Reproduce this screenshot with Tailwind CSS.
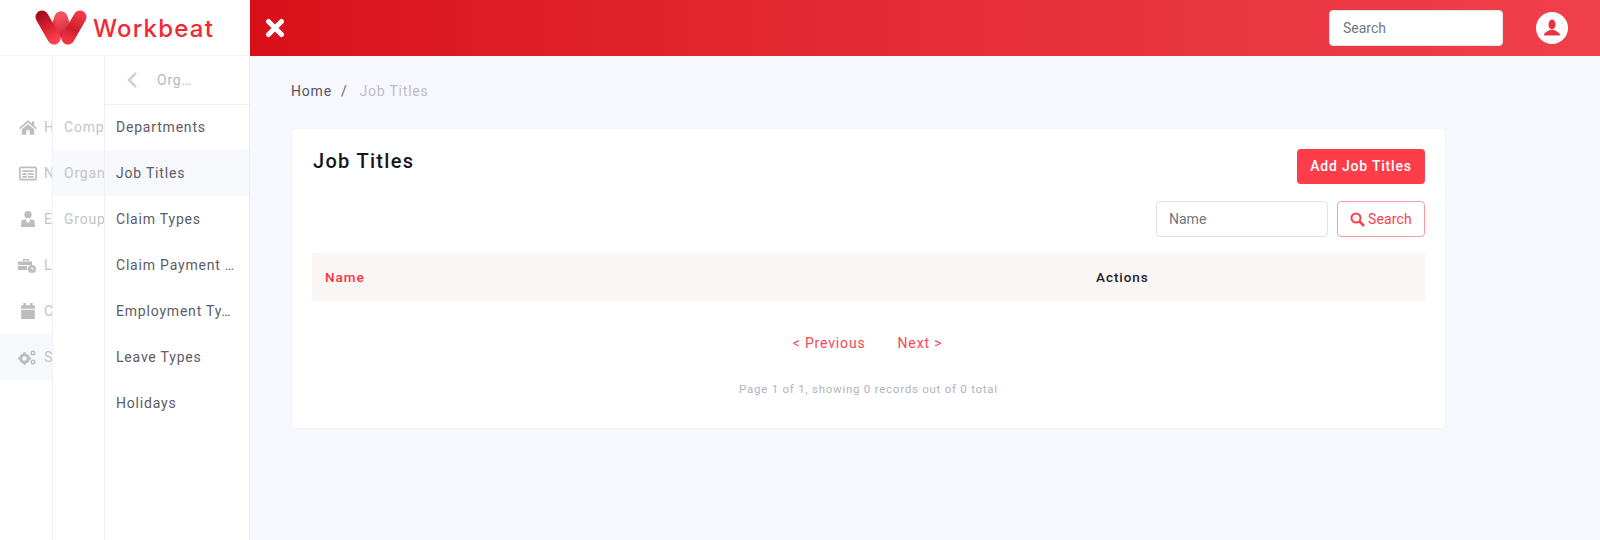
<!DOCTYPE html>
<html lang="en">
<head>
    <meta charset="UTF-8">
    <title>Job Titles</title>
    <script src="https://cdn.jsdelivr.net/npm/@tailwindcss/browser@4"></script>
</head>
<body class="bg-[#f7f8fd] h-[540px] overflow-hidden font-['Roboto',sans-serif] tracking-[0.05em]">
    <!-- top bar -->
    <div class="flex h-[56px]">
        <div class="w-[250px] bg-white border-b border-[#f3f3f9] flex items-center pl-[35px] gap-[6px]">
            <svg width="52" height="35" viewBox="0 0 52 35" fill="none" stroke-width="13" stroke-linecap="round">
                <defs>
                    <linearGradient id="w1" gradientUnits="userSpaceOnUse" x1="7" y1="4" x2="19" y2="30"><stop offset="0" stop-color="#a80f1d"/><stop offset="0.5" stop-color="#d8202f"/><stop offset="1" stop-color="#fb4050"/></linearGradient>
                    <linearGradient id="w2" gradientUnits="userSpaceOnUse" x1="26" y1="6" x2="33" y2="30"><stop offset="0" stop-color="#f5525f"/><stop offset="1" stop-color="#c5182a"/></linearGradient>
                    <linearGradient id="w3" gradientUnits="userSpaceOnUse" x1="45" y1="4" x2="33" y2="30"><stop offset="0" stop-color="#f23a49"/><stop offset="0.6" stop-color="#cf1d2c"/><stop offset="1" stop-color="#ee3343"/></linearGradient>
                </defs>
                <path d="M26 8 L19 27" stroke="#ee3444"/>
                <path d="M26 8 L33 27" stroke="url(#w2)"/>
                <path d="M45 7 L33 28" stroke="url(#w3)"/>
                <path d="M7 7 L19 28" stroke="url(#w1)"/>
            </svg>
            <span class="font-['Inter',sans-serif] font-medium text-[#f32735] text-[24px] leading-none tracking-[0.05em] mt-[3px]">Workbeat</span>
        </div>
        <div class="flex-1 flex items-center bg-linear-to-r from-[#d90f18] to-[#f0404b]">
            <svg width="20" height="20" viewBox="0 0 20 20" class="ml-[15px]" fill="none" stroke="white" stroke-width="5" stroke-linecap="round"><path d="M3.500 3.500 L16.500 16.500 M16.500 3.500 L3.500 16.500"/></svg>
            <div class="ml-auto w-[174px] h-[36px] rounded-[4px] bg-white border border-[#e3e6ea] flex items-center pl-[13px] text-[14px] text-[#6f7780] tracking-normal">Search</div>
            <div class="ml-[33px] mr-[32px] w-[32px] h-[32px] rounded-full bg-white flex items-center justify-center">
                <svg width="20" height="20" viewBox="0 0 20 20" fill="#f0303f"><ellipse cx="10" cy="6.500" rx="3.500" ry="5"/><path d="M2 17.500 C2 14.500 5.500 13.500 8 12 L12 12 C14.500 13.500 18 14.500 18 17.500 Z"/></svg>
            </div>
        </div>
    </div>

    <div class="flex h-[484px]">
        <!-- sidebar -->
        <div class="w-[250px] flex bg-white border-r border-[#eeeef8]">
            <!-- first column, behind the others -->
            <div class="w-[53px] shrink-0 overflow-hidden border-r border-[#f1f1f8] pt-[48px] text-[14px] text-[#c4c4c8] whitespace-nowrap">
                <div class="h-[46px] flex items-center pl-[19px] gap-[7px]">
                    <svg class="shrink-0" width="18" height="15" viewBox="0 0 16 13" fill="#bdbdbd"><path d="M8 0 L11.500 3 V1 H13.500 V4.800 L16 7 L15 8 L8 2 L1 8 L0 7 Z M2.500 8 L8 3.500 L13.500 8 V13 H9.500 V9 H6.500 V13 H2.500 Z"/></svg>
                    <span>H</span>
                </div>
                <div class="h-[46px] flex items-center pl-[19px] gap-[7px]">
                    <svg class="shrink-0" width="18" height="15" viewBox="0 0 16 13"><rect x="0.750" y="1" width="14.500" height="11" rx="1" fill="none" stroke="#bdbdbd" stroke-width="1.500"/><path d="M3 3.500 H13 V5.200 H3 Z M3 6.200 H7 V7.800 H3 Z M8 6.200 H13 V7.800 H8 Z M3 8.700 H7 V10.300 H3 Z M8 8.700 H13 V10.300 H8 Z" fill="#bdbdbd"/></svg>
                    <span>N</span>
                </div>
                <div class="h-[46px] flex items-center pl-[21px] gap-[9px]">
                    <svg class="shrink-0" width="14" height="16" viewBox="0 0 12 14" fill="#bdbdbd"><circle cx="6" cy="3.200" r="3.200"/><path d="M0 14 V10 C0 8 2 7.500 4 7.200 L5 10 H7 L8 7.200 C10 7.500 12 8 12 10 V14 Z"/></svg>
                    <span>E</span>
                </div>
                <div class="h-[46px] flex items-center pl-[18px] gap-[8px]">
                    <svg class="shrink-0" width="18" height="15" viewBox="0 0 18 15" fill="#bdbdbd"><path d="M5 3 V1 H11 V3 H9.500 V2.300 H6.500 V3 Z M0 3.500 H14 V7 H0 Z M0 8 H9 C8.800 9.500 9 11 10 12 H0 Z"/><circle cx="14" cy="11" r="4"/><path d="M14 9 V11.200 H15.800" stroke="white" fill="none"/></svg>
                    <span>L</span>
                </div>
                <div class="h-[46px] flex items-center pl-[21px] gap-[9px]">
                    <svg class="shrink-0" width="14" height="16" viewBox="0 0 12 14" fill="#bdbdbd"><path d="M2 0 H4 V2 H8 V0 H10 V2 H12 V5 H0 V2 H2 Z M0 6 H12 V14 H0 Z"/></svg>
                    <span>C</span>
                </div>
                <div class="h-[46px] flex items-center pl-[18px] gap-[8px] bg-[#f7f8fc]">
                    <svg class="shrink-0" width="18" height="15" viewBox="0 0 18 15"><circle cx="6.500" cy="8.500" r="3.800" fill="none" stroke="#bdbdbd" stroke-width="3"/><path d="M5.500 2 H7.500 V5 H5.500 Z M5.500 12 H7.500 V15 H5.500 Z M0 7.500 H3 V9.500 H0 Z M10 7.500 H13 V9.500 H10 Z" fill="#bdbdbd"/><circle cx="15" cy="3" r="1.800" fill="none" stroke="#bdbdbd" stroke-width="1.500"/><circle cx="15" cy="12" r="1.800" fill="none" stroke="#bdbdbd" stroke-width="1.500"/></svg>
                    <span>S</span>
                </div>
            </div>
            <!-- second column -->
            <div class="w-[52px] shrink-0 overflow-hidden border-r border-[#efeff8] pt-[48px] text-[14px] text-[#c4c4c8] whitespace-nowrap">
                <div class="h-[46px] flex items-center pl-[11px]">Company</div>
                <div class="h-[46px] flex items-center pl-[11px] bg-[#f8f9fd]">Organisation</div>
                <div class="h-[46px] flex items-center pl-[11px]">Groups</div>
            </div>
            <!-- third column -->
            <div class="flex-1 min-w-0">
                <div class="h-[49px] border-b border-[#efeff8] flex items-center pl-[22px] gap-[20px]">
                    <svg width="10" height="16" viewBox="0 0 10 16" fill="none" stroke="#d0d0dc" stroke-width="2.500"><path d="M9 1 L2 8 L9 15"/></svg>
                    <span class="text-[14px] text-[#b9b9bd]">Org…</span>
                </div>
                <div class="text-[14px] text-[#5c5c66] whitespace-nowrap">
                    <div class="h-[45px] flex items-center pl-[11px]">Departments</div>
                    <div class="h-[46px] flex items-center pl-[11px] bg-[#f7f8fc]">Job Titles</div>
                    <div class="h-[46px] flex items-center pl-[11px]">Claim Types</div>
                    <div class="h-[46px] flex items-center pl-[11px]">Claim Payment …</div>
                    <div class="h-[46px] flex items-center pl-[11px]">Employment Ty…</div>
                    <div class="h-[46px] flex items-center pl-[11px]">Leave Types</div>
                    <div class="h-[46px] flex items-center pl-[11px]">Holidays</div>
                </div>
            </div>
        </div>

        <!-- main content -->
        <div class="flex-1 pl-[41px] pt-[27px]">
            <div class="text-[14px] leading-[16px] flex">
                <span class="text-[#55555f]">Home</span>
                <span class="text-[#66666f] ml-[9px]">/</span>
                <span class="text-[#bcbcc8] ml-[12px]">Job Titles</span>
            </div>
            <div class="mt-[29px] w-[1155px] h-[301px] bg-white rounded-[4px] border border-[#f2f2f8] px-[20px] pt-[20px]">
                <div class="flex justify-between items-start">
                    <h1 class="pl-[1px] text-[20px] leading-[24px] font-medium tracking-[0.065em] text-[#16161c]">Job Titles</h1>
                    <button class="w-[128px] h-[35px] bg-[#fe3d4a] rounded-[4px] text-white text-[14px] font-medium">Add Job Titles</button>
                </div>
                <div class="flex justify-end gap-[9px] mt-[17px]">
                    <div class="w-[172px] h-[36px] border border-[#dfe3e8] rounded-[4px] flex items-center pl-[12px] text-[14px] text-[#6f7780] tracking-normal">Name</div>
                    <button class="w-[88px] h-[36px] border border-[#ff9aa1] rounded-[4px] flex items-center justify-center gap-[3px] text-[14px] text-[#fe3d4a] tracking-[0.01em]">
                        <svg width="15" height="15" viewBox="0 0 15 15" fill="none" stroke="#fe3d4a"><circle cx="6" cy="6" r="4.500" stroke-width="2"/><path d="M9.500 9.500 L14 14" stroke-width="2.500"/></svg>
                        Search
                    </button>
                </div>
                <div class="mt-[16px] h-[48px] bg-[#faf6f6] border-y border-[#f5f2f4] flex items-center text-[13.500px] font-medium tracking-[0.07em]">
                    <span class="pl-[13px] w-[784px] text-[#fe3040]">Name</span>
                    <span class="text-[#222228]">Actions</span>
                </div>
                <div class="flex justify-center gap-[32px] mt-[34px] pr-[2px] text-[14px] leading-[16px] tracking-[0.06em] text-[#fe4552]">
                    <span>&lt; Previous</span>
                    <span>Next &gt;</span>
                </div>
                <div class="text-center mt-[31px] text-[11.500px] leading-[14px] tracking-[0.065em] text-[#b2b2c0]">Page 1 of 1, showing 0 records out of 0 total</div>
            </div>
        </div>
    </div>
</body>
</html>
